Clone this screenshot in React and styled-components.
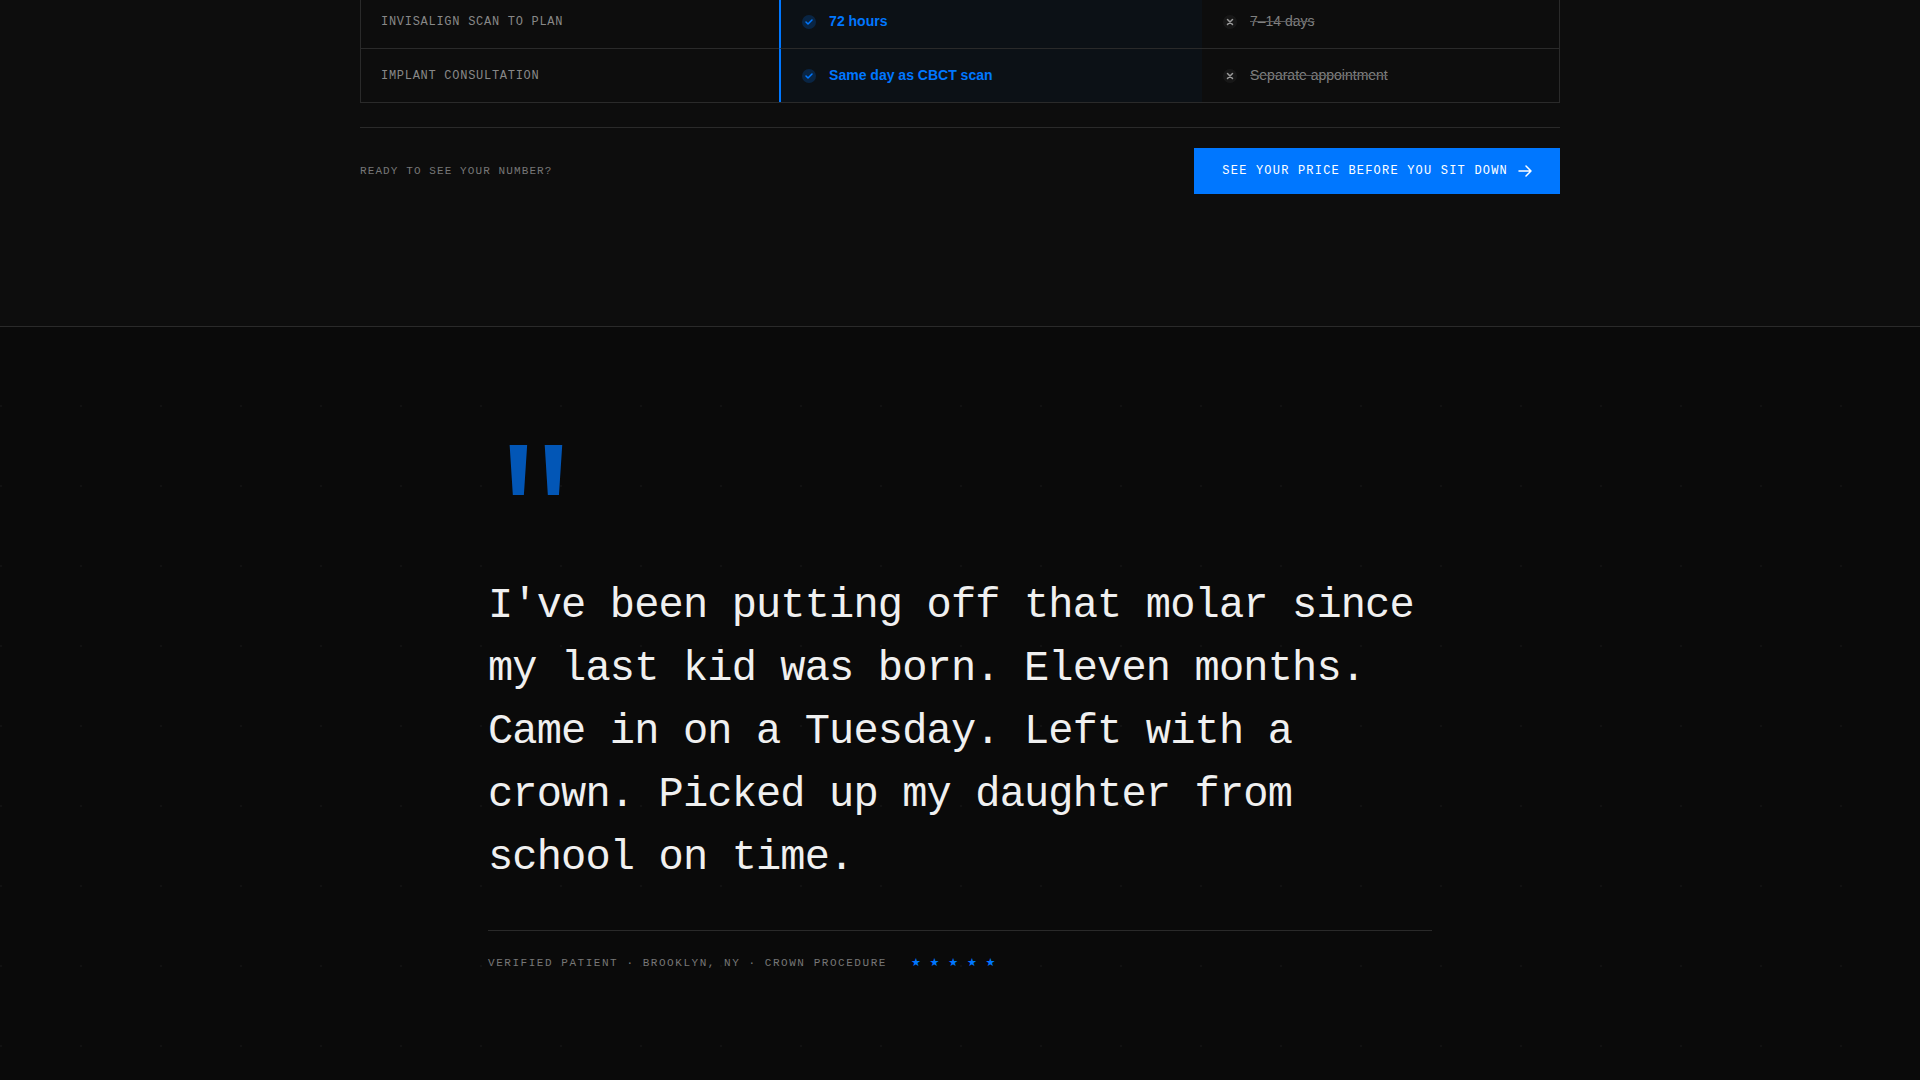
import React from "react";
import styled, { createGlobalStyle } from "styled-components";

const rows = [
  {
    id: "invisalign",
    label: "Invisalign scan to plan",
    ours: "72 hours",
    theirs: "7–14 days",
  },
  {
    id: "implant",
    label: "Implant consultation",
    ours: "Same day as CBCT scan",
    theirs: "Separate appointment",
  },
];

const CheckMark = () => (
  <Mark $good viewBox="0 0 16 16" aria-hidden="true">
    <circle cx="8" cy="8" r="7" />
    <path d="M5 8l2 2 4-4" />
  </Mark>
);

const CrossMark = () => (
  <Mark viewBox="0 0 16 16" aria-hidden="true">
    <circle cx="8" cy="8" r="7" />
    <path d="M5.5 5.5l5 5M10.5 5.5l-5 5" />
  </Mark>
);

function App() {
  return (
    <>
      <GlobalStyle />
      <main>
        <Compare>
          <Container>
            <Table>
              <tbody>
                {rows.map((row) => (
                  <tr key={row.id}>
                    <RowLabel scope="row">{row.label}</RowLabel>
                    <OursCell>
                      <CellContent>
                        <CheckMark />
                        {row.ours}
                      </CellContent>
                    </OursCell>
                    <TheirsCell>
                      <CellContent>
                        <CrossMark />
                        <s>{row.theirs}</s>
                      </CellContent>
                    </TheirsCell>
                  </tr>
                ))}
              </tbody>
            </Table>
            <CtaBar>
              <CtaNote>Ready to see your number?</CtaNote>
              <CtaLink href="#pricing">
                See your price before you sit down
                <Arrow viewBox="0 0 14 14" aria-hidden="true">
                  <path d="M1 7h12M8 2l5 5-5 5" />
                </Arrow>
              </CtaLink>
            </CtaBar>
          </Container>
        </Compare>

        <Testimonial>
          <Figure>
            <QuoteMark aria-hidden="true">"</QuoteMark>
            <Quote>
              I've been putting off that molar since my last kid was born.
              Eleven months. Came in on a Tuesday. Left with a crown. Picked up
              my daughter from school on time.
            </Quote>
            <Caption>
              <span>Verified patient · Brooklyn, NY · Crown procedure</span>
              <Stars aria-label="5 out of 5 stars">★ ★ ★ ★ ★</Stars>
            </Caption>
          </Figure>
        </Testimonial>
      </main>
    </>
  );
}

export default App;

const GlobalStyle = createGlobalStyle`
  :root {
    --bg: #0a0a0a;
    --bg-raised: #0d0d0d;
    --line: #2a2a2a;
    --muted: #777777;
    --text: #f0f0f0;
    --blue: #0077ff;
    --mono: "Liberation Mono", "DejaVu Sans", monospace;
    --sans: "Liberation Sans", sans-serif;
  }
  * {
    box-sizing: border-box;
  }
  body {
    margin: 0;
    background: var(--bg);
    color: var(--text);
    font-family: var(--sans);
    overflow-x: hidden;
  }
`;

const Compare = styled.section`
  background: var(--bg-raised);
  padding: 0 24px 132px;
`;

const Container = styled.div`
  max-width: 1200px;
  margin: 0 auto;
`;

const Table = styled.table`
  width: 100%;
  border-collapse: separate;
  border-spacing: 0;
  border: 1px solid var(--line);
  border-top: 0;
  th,
  td {
    height: 54px;
    padding: 0 20px;
    text-align: left;
    border-bottom: 1px solid var(--line);
  }
  td {
    padding-bottom: 2px;
  }
  tr:first-child th,
  tr:first-child td {
    height: 49px;
    padding-bottom: 5px;
  }
  tr:first-child td {
    padding-bottom: 6px;
  }
  tr:last-child th,
  tr:last-child td {
    height: 53px;
    border-bottom: 0;
  }
`;

const RowLabel = styled.th`
  width: 34.9%;
  font: 400 12px/18px var(--mono);
  letter-spacing: 0.06em;
  text-transform: uppercase;
  color: #888888;
`;

const OursCell = styled.td`
  width: 35.3%;
  font-size: 14px;
  font-weight: 700;
  color: var(--blue);
  background: rgba(0, 119, 255, 0.04);
  && {
    border-left: 2px solid var(--blue);
  }
`;

const TheirsCell = styled.td`
  font-size: 14px;
  color: #808080;
  s {
    text-decoration-color: #5c5c5c;
  }
`;

const CellContent = styled.div`
  display: flex;
  align-items: center;
  gap: 12px;
  line-height: 20px;
`;

const Mark = styled.svg`
  flex: none;
  width: 16px;
  height: 16px;
  margin-top: 2px;
  color: ${(props) => (props.$good ? "var(--blue)" : "#999999")};
  circle {
    fill: currentColor;
    opacity: ${(props) => (props.$good ? 0.2 : 0.08)};
  }
  path {
    fill: none;
    stroke: currentColor;
    stroke-width: 1.5;
    stroke-linecap: round;
    stroke-linejoin: round;
  }
`;

const CtaBar = styled.div`
  display: flex;
  align-items: center;
  justify-content: space-between;
  flex-wrap: wrap;
  gap: 16px;
  margin-top: 24px;
  padding-top: 20px;
  border-top: 1px solid var(--line);
`;

const CtaNote = styled.p`
  margin: 0;
  font: 400 11px/16px var(--mono);
  letter-spacing: 0.1em;
  text-transform: uppercase;
  color: var(--muted);
`;

const CtaLink = styled.a`
  display: inline-flex;
  align-items: center;
  gap: 10px;
  padding: 14px 28px;
  font: 400 12px/18px var(--mono);
  letter-spacing: 0.1em;
  text-transform: uppercase;
  text-decoration: none;
  color: #ffffff;
  background: var(--blue);
  &:hover {
    background: #0066dd;
  }
`;

const Arrow = styled.svg`
  width: 14px;
  height: 14px;
  fill: none;
  stroke: currentColor;
  stroke-width: 1.5;
  stroke-linecap: round;
  stroke-linejoin: round;
`;

const Testimonial = styled.section`
  padding: 144px 48px 108px;
  border-top: 1px solid var(--line);
  background-color: var(--bg);
  background-image: radial-gradient(
    circle at 1px 79px,
    rgba(255, 255, 255, 0.03) 1px,
    transparent 1px
  );
  background-size: 80px 80px;
`;

const Figure = styled.figure`
  max-width: 944px;
  margin: 0 auto;
`;

const QuoteMark = styled.div`
  font: 400 160px/96px var(--mono);
  color: var(--blue);
  opacity: 0.7;
  margin-bottom: 8px;
`;

const Quote = styled.blockquote`
  margin: 0;
  font: 400 42px/63px var(--mono);
  letter-spacing: -0.02em;
  color: var(--text);
`;

const Caption = styled.figcaption`
  display: flex;
  align-items: center;
  flex-wrap: wrap;
  gap: 24px;
  margin-top: 40px;
  padding-top: 24px;
  border-top: 1px solid var(--line);
  font: 400 11px/16px var(--mono);
  letter-spacing: 0.14em;
  text-transform: uppercase;
  color: var(--muted);
`;

const Stars = styled.span`
  letter-spacing: 0.1em;
  color: var(--blue);
`;
